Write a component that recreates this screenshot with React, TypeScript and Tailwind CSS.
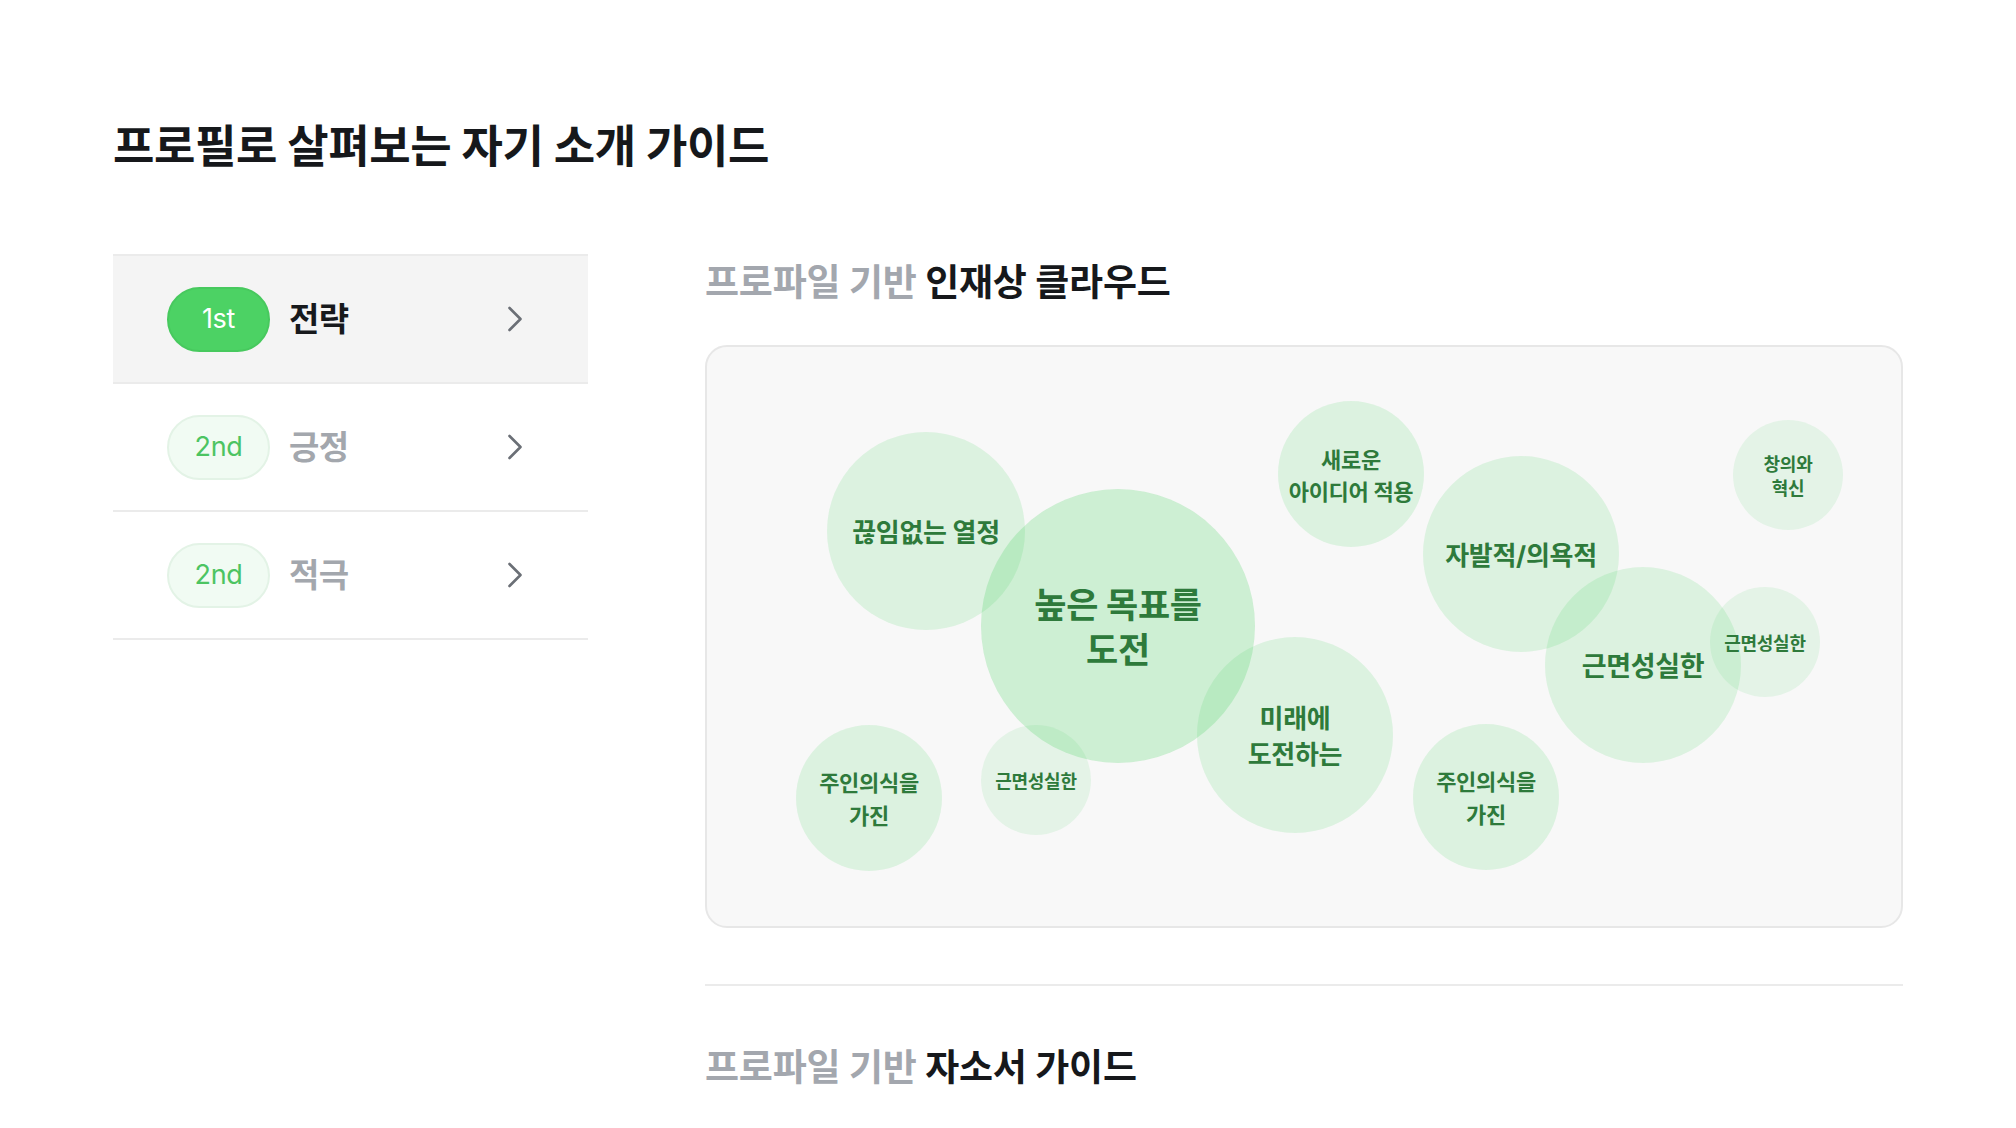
const fontStack = "font-['Inter','Noto_Sans_CJK_KR',sans-serif]"

type Step = { rank: string; label: string; active?: boolean }

const steps: Step[] = [
  { rank: '1st', label: '전략', active: true },
  { rank: '2nd', label: '긍정' },
  { rank: '2nd', label: '적극' },
]

// cx, cy, r are relative to the cloud box; tone is the fill strength
type Bubble = {
  lines: string[]
  cx: number
  cy: number
  r: number
  size: number
  lh: number
  tone: 'strong' | 'mid' | 'soft'
}

const bubbles: Bubble[] = [
  { lines: ['끊임없는 열정'], cx: 221, cy: 186, r: 99, size: 26, lh: 32, tone: 'mid' },
  { lines: ['새로운', '아이디어 적용'], cx: 646, cy: 129, r: 73, size: 22, lh: 32, tone: 'mid' },
  { lines: ['자발적/의욕적'], cx: 816, cy: 209, r: 98, size: 26, lh: 34, tone: 'mid' },
  { lines: ['창의와', '혁신'], cx: 1083, cy: 130, r: 55, size: 18, lh: 24, tone: 'soft' },
  { lines: ['근면성실한'], cx: 938, cy: 320, r: 98, size: 27, lh: 34, tone: 'mid' },
  { lines: ['근면성실한'], cx: 1060, cy: 297, r: 55, size: 18, lh: 24, tone: 'soft' },
  { lines: ['미래에', '도전하는'], cx: 590, cy: 390, r: 98, size: 26, lh: 36, tone: 'mid' },
  { lines: ['주인의식을', '가진'], cx: 164, cy: 453, r: 73, size: 22, lh: 33, tone: 'mid' },
  { lines: ['근면성실한'], cx: 331, cy: 435, r: 55, size: 18, lh: 24, tone: 'soft' },
  { lines: ['주인의식을', '가진'], cx: 781, cy: 452, r: 73, size: 22, lh: 33, tone: 'mid' },
  { lines: ['높은 목표를', '도전'], cx: 413, cy: 281, r: 137, size: 35, lh: 45, tone: 'strong' },
]

const toneClass = {
  strong: 'bg-[#4cd264]/25',
  mid: 'bg-[#4cd264]/[0.16]',
  soft: 'bg-[#4cd264]/[0.11]',
}

function Chevron() {
  return (
    <svg width="16" height="26" viewBox="0 0 16 26" fill="none" className="shrink-0">
      <path d="M2.5 2 L13.5 13 L2.5 24" stroke="#6b6f76" strokeWidth="2.6" strokeLinecap="round" strokeLinejoin="round" />
    </svg>
  )
}

function StepRow({ step }: { step: Step }) {
  return (
    <div
      className={`flex h-[128px] items-center border-b-2 border-[#ebebeb] pl-[54px] pr-[65px] ${
        step.active ? 'bg-[#f4f4f4]' : 'bg-white'
      }`}
    >
      <div
        className={`flex h-[65px] w-[103px] items-center justify-center rounded-full border-2 text-[27px] tracking-[-0.3px] ${
          step.active
            ? 'border-[#47c95e] bg-[#4cd264] text-white'
            : 'border-[#e3f3e6] bg-[#f1fbf3] text-[#4cc462]'
        }`}
      >
        {step.rank}
      </div>
      <span
        className={`ml-[19px] flex-1 pt-[2px] text-[33px] font-bold tracking-[-0.5px] ${
          step.active ? 'text-[#17191c]' : 'text-[#a3a7ad]'
        }`}
      >
        {step.label}
      </span>
      <Chevron />
    </div>
  )
}

function Heading({ muted, strong, className = '' }: { muted: string; strong: string; className?: string }) {
  return (
    <h2 className={`text-[37px] font-bold leading-[44px] tracking-[-0.2px] ${className}`}>
      <span className="text-[#a3a7ae]">{muted}</span> <span className="text-[#16181b]">{strong}</span>
    </h2>
  )
}

function Cloud() {
  return (
    <div className="relative h-[583px] overflow-hidden rounded-[22px] border-2 border-[#e7e7e7] bg-[#f8f8f8]">
      {bubbles.map((b, i) => (
        <div
          key={i}
          className={`absolute flex flex-col items-center justify-center rounded-full pt-[4px] text-center font-bold tracking-[-0.3px] text-[#2e7a3b] ${toneClass[b.tone]}`}
          style={{
            left: b.cx - b.r - 2,
            top: b.cy - b.r - 2,
            width: b.r * 2,
            height: b.r * 2,
            fontSize: b.size,
            lineHeight: `${b.lh}px`,
          }}
        >
          {b.lines.map((line) => (
            <span key={line} className="whitespace-nowrap">
              {line}
            </span>
          ))}
        </div>
      ))}
    </div>
  )
}

export default function App() {
  return (
    <div className={`min-h-screen w-full bg-white px-[113px] pt-[122px] ${fontStack}`}>
      <h1 className="text-[45px] font-bold leading-[50px] tracking-[-0.4px] text-[#16181b]">
        프로필로 살펴보는 자기 소개 가이드
      </h1>

      <div className="mt-[82px] flex items-start gap-[117px]">
        {/* step list */}
        <div className="w-[475px] shrink-0 border-t-2 border-[#ebebeb]">
          {steps.map((s, i) => (
            <StepRow key={i} step={s} />
          ))}
        </div>

        {/* cloud + guide */}
        <div className="flex-1 pt-[7px]">
          <Heading muted="프로파일 기반" strong="인재상 클라우드" />
          <div className="mt-[40px]">
            <Cloud />
          </div>
          <div className="mt-[56px] h-[2px] bg-[#ebebeb]" />
          <Heading muted="프로파일 기반" strong="자소서 가이드" className="mt-[60px]" />
        </div>
      </div>
    </div>
  )
}
